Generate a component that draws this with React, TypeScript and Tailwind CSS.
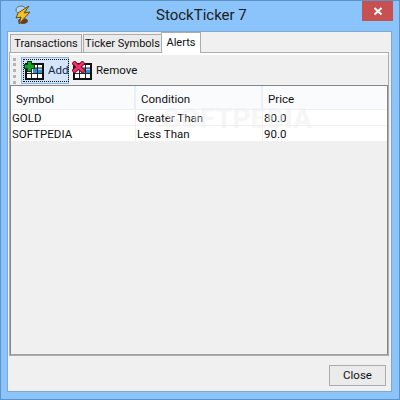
const font = { fontFamily: 'Roboto, "Noto Sans", sans-serif' };

function GridIcon({ mark }: { mark: "add" | "remove" }) {
  return (
    <svg width="20" height="20" viewBox="0 0 20 20" className="shrink-0">
      <rect x="2" y="3" width="17" height="15" fill="#fff" stroke="#111" strokeWidth="2" />
      <rect x="9" y="7" width="9" height="5" fill="#2f8fd8" />
      <rect x="14" y="7" width="4" height="2" fill="#9fd0f2" />
      <path d="M7.5 4V17M13.5 4V17M3 7H18M3 12.5H18" stroke="#222" strokeWidth="1" />
      {mark === "add" ? (
        <>
          <path d="M5.5 0V11M0 5.5H11" stroke="#063d10" strokeWidth="5" />
          <path d="M5.5 1V10M1 5.5H10" stroke="#16a02e" strokeWidth="3" />
        </>
      ) : (
        <>
          <path d="M1 1L12 11M12 1L1 11" stroke="#7a0c2c" strokeWidth="4.5" />
          <path d="M1.5 1.5L11.5 10.5M11.5 1.5L1.5 10.5" stroke="#f0346c" strokeWidth="2.5" />
        </>
      )}
    </svg>
  );
}

function Row({ a, b, c }: { a: string; b: string; c: string }) {
  return (
    <div className="flex h-4 bg-white border-b border-[#f0f0f0] leading-[16px] text-[#111] whitespace-nowrap">
      <div className="w-[125px] pl-px border-r border-[#f0f0f0]">{a}</div>
      <div className="w-[127px] pl-px border-r border-[#f0f0f0]">{b}</div>
      <div className="pl-px">{c}</div>
    </div>
  );
}

export default function App() {
  return (
    <div className="w-[400px] h-[400px] bg-[#8ac4fb] border border-[#5f93c8] flex flex-col overflow-hidden whitespace-nowrap" style={font}>
      <div className="h-[30px] shrink-0 flex relative">
        <svg width="24" height="24" viewBox="0 0 24 24" className="ml-[9px] mt-[3px]">
          <ellipse cx="11" cy="6" rx="5" ry="4" fill="#b9d4e8" stroke="#5a6f86" strokeWidth="1" />
          <ellipse cx="13" cy="17" rx="5" ry="3" fill="#6b3c22" />
          <path d="M19 2L8 9L6 14L11 13L9 20L20 8L14 9L19 2Z" fill="#f2c21f" stroke="#6b4a10" strokeWidth="1" />
        </svg>
        <div className="absolute left-[155px] top-[3px] text-[15px] leading-[23px] text-[#202020]">StockTicker 7</div>
        <div className="ml-auto mr-[6px] w-[31px] h-5 bg-[#c75050] flex items-center justify-center">
          <svg width="10" height="10" viewBox="0 0 10 10">
            <path d="M1.5 2L8.5 8.5M8.5 2L1.5 8.5" stroke="#fff" strokeWidth="2" />
          </svg>
        </div>
      </div>

      <div className="ml-[6px] mr-[7px] h-[361px] border border-[#7ea8d2] bg-[#f0f0f0] flex flex-col text-[11.5px] text-[#111]">
        <div className="h-[20px] shrink-0 flex items-end pl-[2px] relative z-10 text-[11px]">
          <div className="h-[18px] w-[72px] mr-px bg-[#ebebeb] border border-b-0 border-[#acacac] leading-[18px] text-center">Transactions</div>
          <div className="h-[18px] w-[79px] bg-[#ebebeb] border border-b-0 border-[#acacac] leading-[18px] text-center">Ticker Symbols</div>
          <div className="h-[21px] w-[40px] -mb-px -ml-px bg-white border border-b-0 border-[#acacac] leading-[19px] text-center">Alerts</div>
        </div>

        <div className="ml-[1px] w-[380px] h-[304px] border border-[#acacac] bg-[#f0f0f0] flex flex-col">
          <div className="h-[2px] bg-white" />
          <div className="h-[30px] flex items-center pl-[3px] pt-[1px]">
            <div className="w-[3px] h-[26px] mr-[5px] border-l-[3px] border-dotted border-[#b4b4b4]" />
            <div className="h-[27px] w-[48px] bg-[#d3e5f6] border border-[#84b5e3] p-[1px] flex">
              <div className="flex-1 flex items-center border border-dotted border-[#111]">
                <GridIcon mark="add" />
                <span className="ml-[4px] text-[#0d2a4a]">Add</span>
              </div>
            </div>
            <div className="ml-[3px]"><GridIcon mark="remove" /></div>
            <span className="ml-[4px]">Remove</span>
          </div>

          <div className="flex-1 border border-[#828790] border-b-[#a0a0a0] flex flex-col relative">
            <div className="h-6 flex bg-[#f9fbfd] border-b border-[#eef2f7]">
              <div className="w-[125px] pl-[5px] leading-[26px] border-r-[2px] border-[#e8eff7]">Symbol</div>
              <div className="w-[127px] pl-[5px] leading-[26px] border-r-[2px] border-[#e8eff7]">Condition</div>
              <div className="flex-1 pl-[5px] leading-[26px]">Price</div>
            </div>
            <Row a="GOLD" b="Greater Than" c="80.0" />
            <Row a="SOFTPEDIA" b="Less Than" c="90.0" />
            <div className="absolute left-[152px] top-[18px] text-[28px] leading-[30px] font-bold text-[#eeeeee] opacity-50 pointer-events-none">SOFTPEDIA</div>
          </div>
        </div>

        <div className="flex-1 flex justify-end items-start pt-[9px] pr-[5px]">
          <div className="w-[57px] h-[21px] bg-[#ebebeb] border border-[#acacac] text-center leading-[19px]">Close</div>
        </div>
      </div>
    </div>
  );
}
